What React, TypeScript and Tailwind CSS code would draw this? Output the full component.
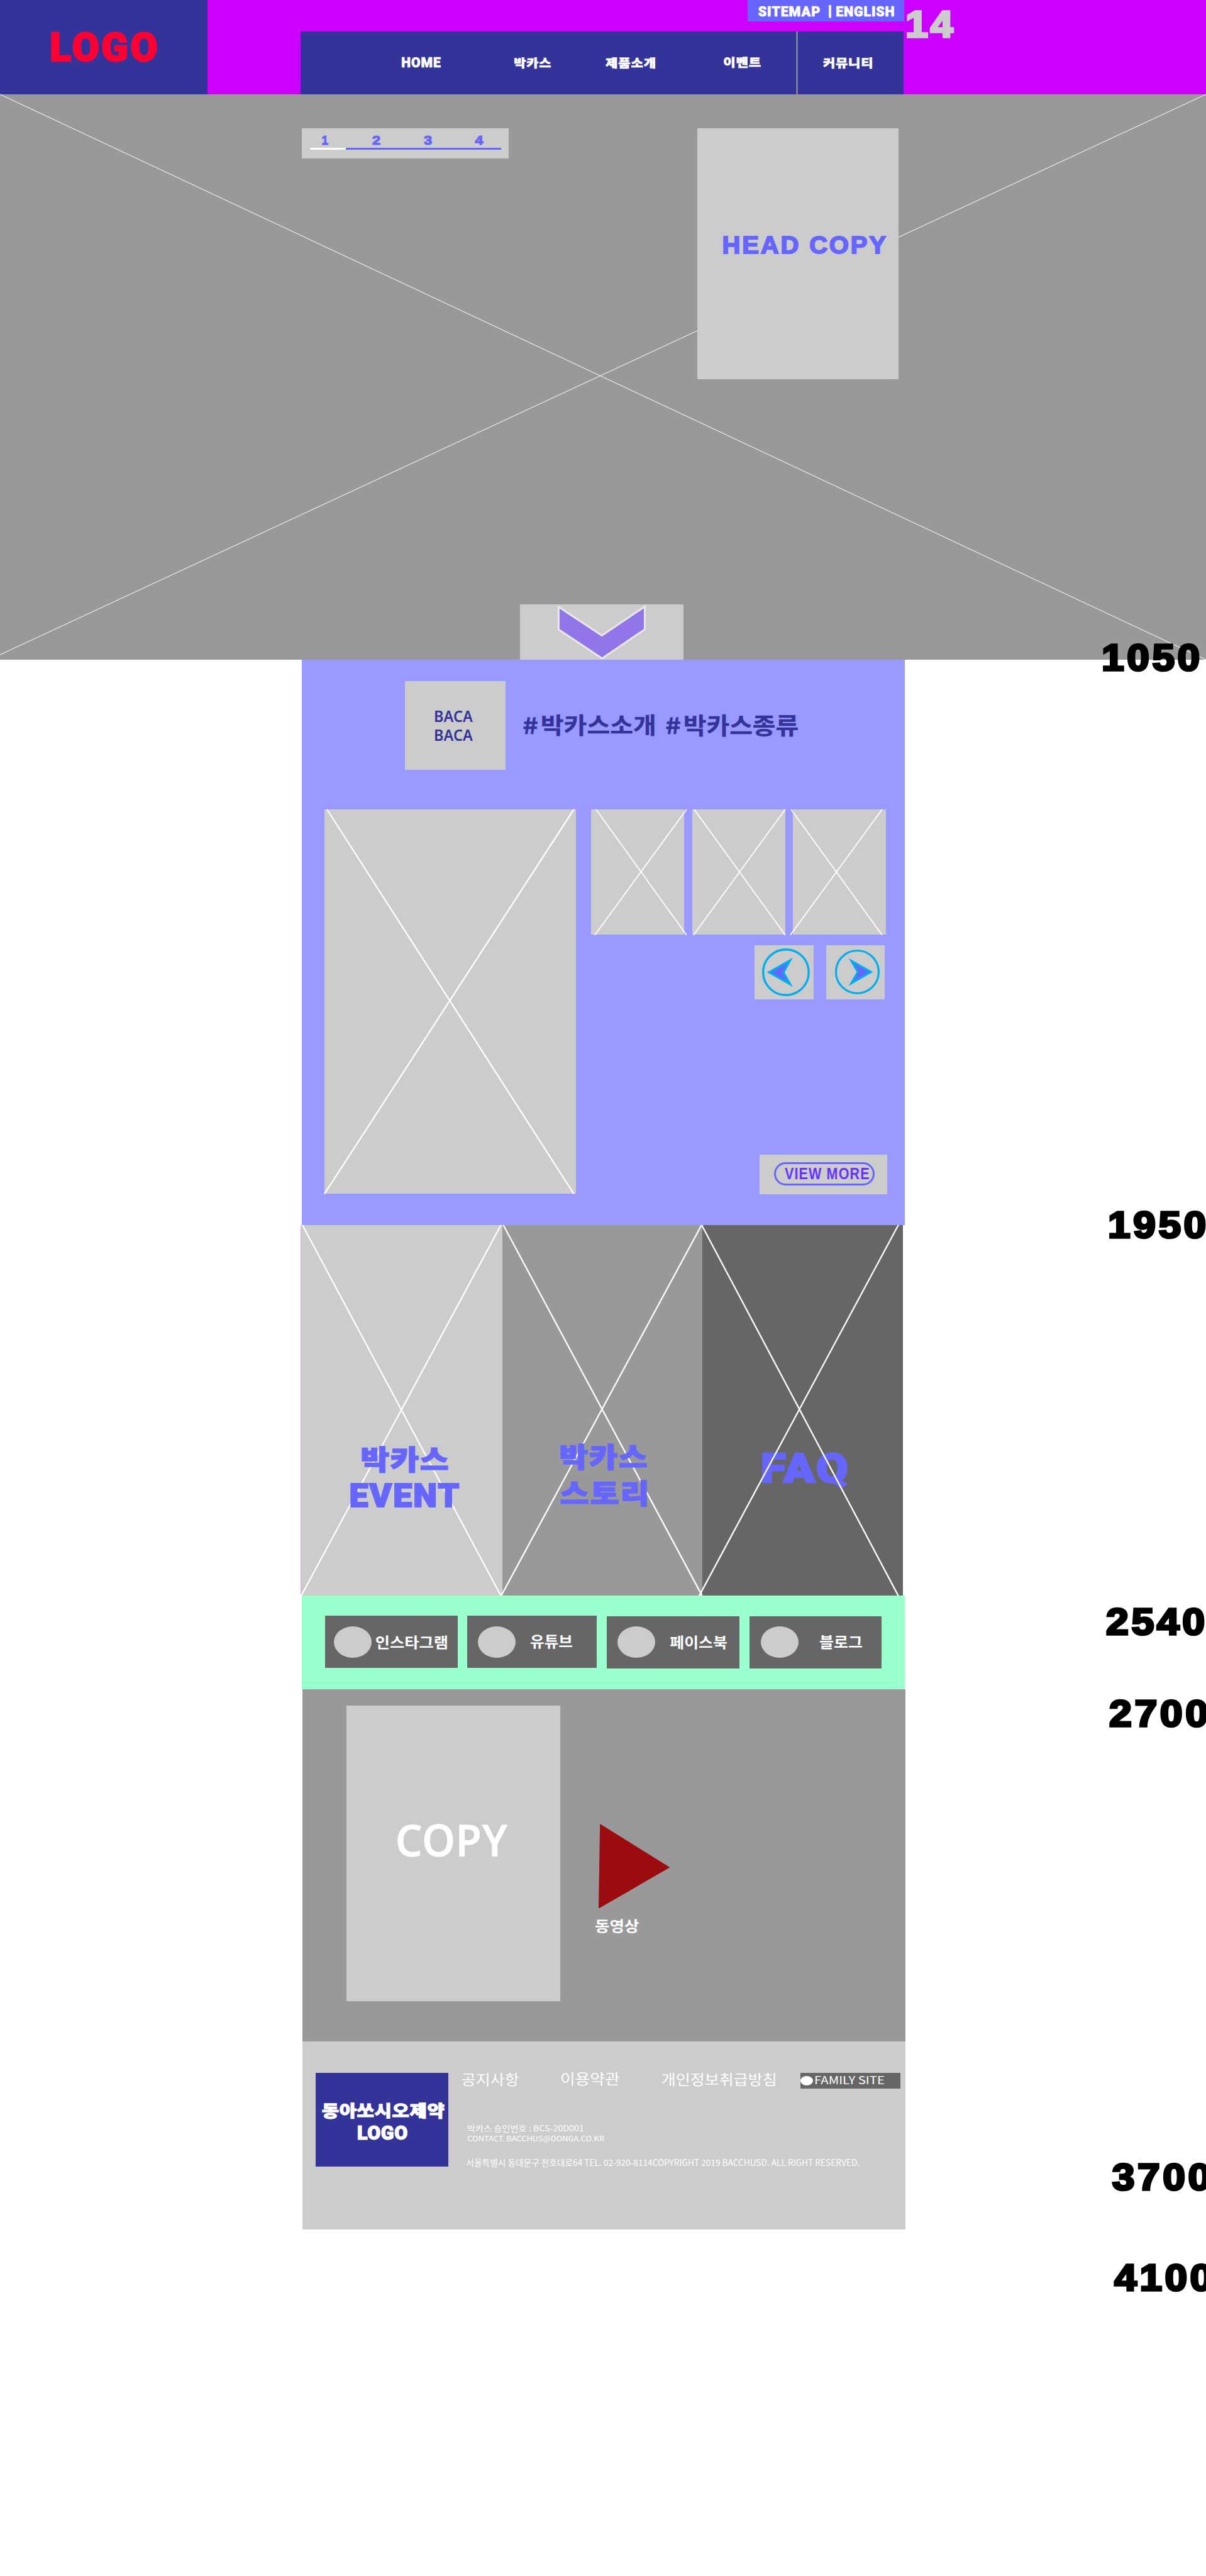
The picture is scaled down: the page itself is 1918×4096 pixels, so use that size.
import { useLayoutEffect, useRef, type ReactNode } from "react";

const HEAVY = "font-['Roboto','Noto_Sans_CJK_KR',sans-serif] font-black";
const ARIAL = "font-['Liberation_Sans',sans-serif] font-bold";
const KR = "font-['Noto_Sans_CJK_KR',sans-serif]";
const LATIN = "font-['Noto_Sans',sans-serif]";

/** Single line of text stretched so that its ink fills the box given by `className`. */
function Fit({ children, className, font }: { children: string; className: string; font: string }) {
  const box = useRef<HTMLDivElement>(null);
  const span = useRef<HTMLSpanElement>(null);

  useLayoutEffect(() => {
    const b = box.current;
    const s = span.current;
    const ctx = document.createElement("canvas").getContext("2d");
    if (!b || !s || !ctx) return;
    const cs = getComputedStyle(s);
    ctx.font = `${cs.fontWeight} 100px ${cs.fontFamily}`;
    const m = ctx.measureText(children);
    const tracking = (parseFloat(cs.letterSpacing) || 0) * (children.length - 1);
    const stroke = parseFloat(cs.getPropertyValue("-webkit-text-stroke-width")) || 0;
    const left = m.actualBoundingBoxLeft + stroke / 2;
    const top = m.actualBoundingBoxAscent + stroke / 2;
    const sx = b.clientWidth / (left + m.actualBoundingBoxRight + tracking + stroke / 2);
    const sy = b.clientHeight / (top + m.actualBoundingBoxDescent + stroke / 2);
    const base = (100 + m.fontBoundingBoxAscent - m.fontBoundingBoxDescent) / 2;
    s.style.transform = `translate(${left * sx}px, ${(top - base) * sy}px) scale(${sx}, ${sy})`;
  }, [children]);

  return (
    <div ref={box} className={`relative shrink-0 ${className}`}>
      <span
        ref={span}
        className={`absolute left-0 top-0 origin-top-left whitespace-pre text-[100px] leading-none ${font}`}
      >
        {children}
      </span>
    </div>
  );
}

/** Crossed placeholder lines laid over a panel. */
function Cross({ w, h, a, b, width = 1.8 }: { w: number; h: number; a: number[]; b: number[]; width?: number }) {
  return (
    <svg
      className="pointer-events-none absolute left-0 top-0 overflow-visible"
      width={w}
      height={h}
      stroke="#fff"
      strokeWidth={width}
    >
      <line x1={a[0]} y1={a[1]} x2={a[2]} y2={a[3]} />
      <line x1={b[0]} y1={b[1]} x2={b[2]} y2={b[3]} />
    </svg>
  );
}

function Header() {
  const font = `${HEAVY} tracking-[4px] text-white [-webkit-text-stroke:3px_white]`;
  return (
    <header className="flex h-[150px] bg-[#cc00ff]">
      <div className="h-[150px] w-[330px] bg-[#333399] pl-[81px] pt-[50px]">
        <Fit className="h-[49px] w-[169px]" font={`${HEAVY} tracking-[6px] text-[#ff0033] [-webkit-text-stroke:4px_#ff0033]`}>LOGO</Fit>
      </div>
      <div className="ml-[148px] w-[962px]">
        <div className="ml-[712px] flex h-[34px] w-[250px] bg-[#6666ff] pl-[17px] pt-[8px]">
          <Fit className="mt-[2px] h-[17px] w-[98px]" font={font}>SITEMAP</Fit>
          <Fit className="ml-[14px] h-[20px] w-[4px]" font={`${HEAVY} text-white`}>|</Fit>
          <Fit className="ml-[8px] mt-[2px] h-[17px] w-[92px]" font={font}>ENGLISH</Fit>
        </div>
        <nav className="mt-[16px] flex h-[100px] w-[960px] bg-[#333399]">
          <Fit className="ml-[162px] mt-[41px] h-[17px] w-[62px]" font={font}>HOME</Fit>
          <Fit className="ml-[117px] mt-[41px] h-[18px] w-[58px]" font={font}>박카스</Fit>
          <Fit className="ml-[87px] mt-[41px] h-[18px] w-[79px]" font={font}>제품소개</Fit>
          <Fit className="ml-[109px] mt-[40px] h-[18px] w-[59px]" font={font}>이벤트</Fit>
          <div className="ml-[57px] h-[100px] w-[1px] bg-white" />
          <Fit className="ml-[41px] mt-[41px] h-[18px] w-[78px]" font={font}>커뮤니티</Fit>
        </nav>
      </div>
      <Fit className="ml-[4px] mt-[17px] h-[44px] w-[76px]" font={`${ARIAL} tracking-[6px] text-[#cccccc] [-webkit-text-stroke:6px_#cccccc]`}>14</Fit>
    </header>
  );
}

function Hero() {
  const num = `${ARIAL} text-[#6666ff] [-webkit-text-stroke:6px_#6666ff]`;
  return (
    <section className="relative h-[900px] bg-[#999999]">
      <Cross w={1920} h={900} a={[0, 0, 1920, 900]} b={[1920, 0, 0, 892]} width={1} />
      <div className="relative flex pl-[480px] pt-[54px]">
        <div className="h-[48px] w-[330px] bg-[#cccccc]">
          <div className="flex pt-[12px]">
            <Fit className="ml-[33px] h-[15px] w-[10px]" font={num}>1</Fit>
            <Fit className="ml-[70px] h-[15px] w-[13px]" font={num}>2</Fit>
            <Fit className="ml-[69px] h-[15px] w-[13px]" font={num}>3</Fit>
            <Fit className="ml-[68px] h-[15px] w-[14px]" font={num}>4</Fit>
          </div>
          <div className="ml-[14px] mt-[4px] flex h-[3px] w-[304px] bg-[#6666ff]">
            <div className="h-[3px] w-[57px] bg-white" />
          </div>
        </div>
        <div className="ml-[300px] h-[400px] w-[320px] bg-[#cccccc] pl-[41px] pt-[171px]">
          <Fit className="h-[30px] w-[260px]" font={`${ARIAL} tracking-[7px] text-[#6666ff] [-webkit-text-stroke:5px_#6666ff]`}>HEAD COPY</Fit>
        </div>
      </div>
      <div className="absolute bottom-0 left-[828px] h-[88px] w-[260px] bg-[#cccccc]">
        <svg width="260" height="88" viewBox="828 962 260 88">
          <path
            d="M889.5 966 L958.3 1011.5 L1026.7 965.5 V1001.8 L958.7 1048 L889.5 1002 Z"
            fill="#9275e8"
            stroke="#e8e8e8"
            strokeWidth="3"
          />
        </svg>
      </div>
    </section>
  );
}

const thumbs = [
  { cls: "", a: [8, 0, 152, 200], b: [152, 0, 6, 200] },
  { cls: "ml-[13px]", a: [3, 0, 148, 200], b: [148, 0, 2, 200] },
  { cls: "ml-[12px]", a: [-3, 0, 142, 200], b: [142, 0, -4, 200] },
];

function Intro() {
  const tag = `${KR} font-bold text-[#333399] [-webkit-text-stroke:1px_#333399]`;
  const baca = `${LATIN} font-semibold text-[#333399]`;
  return (
    <section className="ml-[480px] h-[900px] w-[960px] bg-[#9999ff]">
      <div className="flex pl-[165px] pt-[34px]">
        <div className="h-[141px] w-[160px] bg-[#cccccc] pl-[48px] pt-[47px]">
          <Fit className="h-[18px] w-[60px]" font={baca}>BACA</Fit>
          <Fit className="mt-[12px] h-[18px] w-[60px]" font={baca}>BACA</Fit>
        </div>
        <Fit className="ml-[28px] mt-[57px] h-[27px] w-[23px]" font={tag}>#</Fit>
        <Fit className="ml-[7px] mt-[53px] h-[35px] w-[179px]" font={tag}>박카스소개</Fit>
        <Fit className="ml-[18px] mt-[57px] h-[27px] w-[23px]" font={tag}>#</Fit>
        <Fit className="ml-[7px] mt-[53px] h-[36px] w-[180px]" font={tag}>박카스종류</Fit>
      </div>
      <div className="flex pl-[37px] pt-[63px]">
        <div className="relative h-[612px] w-[400px] bg-[#cccccc]">
          <Cross w={400} h={612} a={[4, 0, 397, 612]} b={[397, 0, 0, 612]} width={2.3} />
        </div>
        <div className="ml-[24px] w-[480px]">
          <div className="flex">
            {thumbs.map((t, i) => (
              <div key={i} className={`relative h-[200px] w-[148px] bg-[#cccccc] ${t.cls}`}>
                <Cross w={148} h={200} a={t.a} b={t.b} />
              </div>
            ))}
          </div>
          <div className="mt-[17px] flex pl-[260px]">
            <div className="h-[86px] w-[94px] bg-[#cccccc]">
              <svg width="94" height="86" viewBox="1201 1505 94 86" stroke="#00aeef" strokeWidth="3.4">
                <circle cx="1251" cy="1548" r="36.3" fill="none" />
                <path d="M1224.3 1548 L1257.5 1529.2 L1247 1548.3 L1257.5 1566.8 Z" fill="#6666ff" />
              </svg>
            </div>
            <div className="ml-[20px] h-[86px] w-[94px] bg-[#cccccc]">
              <svg width="94" height="86" viewBox="1315 1505 94 86" stroke="#00aeef" strokeWidth="3.2">
                <circle cx="1364.5" cy="1547.5" r="34" fill="none" />
                <path d="M1386.3 1547.5 L1355 1529.8 L1365.3 1547.5 L1355 1565.6 Z" fill="#6666ff" />
              </svg>
            </div>
          </div>
          <div className="ml-[268px] mt-[247px] h-[63px] w-[203px] bg-[#cccccc] pl-[23px] pt-[12px]">
            <div className="h-[37px] w-[160px] rounded-full border-[3.1px] border-[#6666ff] pl-[14px] pt-[7px]">
              <Fit className="h-[18px] w-[134px]" font="font-['Liberation_Sans',sans-serif] tracking-[5px] font-bold text-[#6633ff]">VIEW MORE</Fit>
            </div>
          </div>
        </div>
      </div>
    </section>
  );
}

function Panels() {
  const t = `${HEAVY} tracking-[4px] text-[#6666ff] [-webkit-text-stroke:4px_#6666ff]`;
  return (
    <section className="ml-[478px] flex h-[590px] w-[960px]">
      <div className="relative w-[322px] border-l border-[#e8a0f0] bg-[#cccccc]">
        <Cross w={321} h={590} a={[2, 0, 318, 590]} b={[318, 0, 0, 590]} width={2.3} />
        <div className="relative pl-[79px] pt-[351px]">
          <Fit className="ml-[18px] h-[43px] w-[138px]" font={t}>박카스</Fit>
          <Fit className="mt-[16px] h-[39px] w-[174px]" font={t}>EVENT</Fit>
        </div>
      </div>
      <div className="relative w-[318px] bg-[#999999]">
        <Cross w={318} h={590} a={[1.5, 0, 318, 590]} b={[317, 0, -2, 590]} width={2.3} />
        <div className="relative pl-[92px] pt-[347px]">
          <Fit className="h-[43px] w-[138px]" font={t}>박카스</Fit>
          <Fit className="mt-[16px] h-[43px] w-[138px]" font={t}>스토리</Fit>
        </div>
      </div>
      <div className="relative w-[320px] bg-[#666666] pl-[95px] pt-[361px]">
        <Fit className="h-[59px] w-[136px]" font={t}>FAQ</Fit>
        <Cross w={320} h={590} a={[-1, 0, 312, 590]} b={[312, 0, -5, 590]} width={2.3} />
      </div>
    </section>
  );
}

function Social({ className, circle, children }: { className: string; circle: string; children: ReactNode }) {
  return (
    <div className={`flex h-[83px] bg-[#666666] ${className}`}>
      <div className={`h-[50px] w-[60px] shrink-0 rounded-[50%] bg-[#cccccc] ${circle}`} />
      {children}
    </div>
  );
}

function SocialBar() {
  const f = `${KR} font-bold text-white`;
  return (
    <section className="ml-[480px] flex h-[149px] w-[960px] bg-[#99ffcc] pl-[38px] pt-[32px]">
      <Social className="w-[211px]" circle="ml-[14px] mt-[17px]">
        <Fit className="ml-[7px] mt-[31px] h-[22px] w-[113px]" font={f}>인스타그램</Fit>
      </Social>
      <Social className="ml-[15px] w-[206px]" circle="ml-[17px] mt-[17px]">
        <Fit className="ml-[24px] mt-[31px] h-[22px] w-[66px]" font={f}>유튜브</Fit>
      </Social>
      <Social className="ml-[16px] mt-[1px] w-[211px]" circle="ml-[17px] mt-[16px]">
        <Fit className="ml-[24px] mt-[30px] h-[22px] w-[90px]" font={f}>페이스북</Fit>
      </Social>
      <Social className="ml-[16px] mt-[1px] w-[211px]" circle="ml-[18px] mt-[16px]">
        <Fit className="ml-[34px] mt-[30px] h-[22px] w-[67px]" font={f}>블로그</Fit>
      </Social>
    </section>
  );
}

function Video() {
  return (
    <section className="ml-[482px] flex h-[560px] w-[960px] bg-[#999999] pl-[70px] pt-[26px]">
      <div className="h-[470px] w-[340px] bg-[#cccccc] pl-[81px] pt-[190px]">
        <Fit className="h-[51px] w-[176px]" font={`${LATIN} font-semibold text-white`}>COPY</Fit>
      </div>
      <div className="pl-[56px] pt-[188px]">
        <svg className="ml-[5px]" width="114" height="136" viewBox="953 2903 114 136">
          <path d="M955.2 2903 L1066.5 2972.3 L953 3038 Z" fill="#9b0b0f" />
        </svg>
        <Fit className="mt-[15px] h-[22px] w-[69px]" font={`${KR} font-bold text-white`}>동영상</Fit>
      </div>
    </section>
  );
}

function Footer() {
  const logo = `${HEAVY} tracking-[2px] text-white [-webkit-text-stroke:4px_white]`;
  const link = `${KR} font-normal text-white`;
  return (
    <footer className="ml-[482px] flex h-[300px] w-[960px] bg-[#cccccc] pl-[21px] pt-[50px]">
      <div className="h-[150px] w-[211px] bg-[#333399] pl-[10px] pt-[49px]">
        <Fit className="h-[26px] w-[195px]" font={logo}>동아쏘시오제약</Fit>
        <Fit className="ml-[57px] mt-[9px] h-[24px] w-[79px]" font={logo}>LOGO</Fit>
      </div>
      <div className="ml-[22px]">
        <div className="flex h-[25px]">
          <Fit className="h-[21px] w-[90px]" font={link}>공지사항</Fit>
          <Fit className="-mt-px ml-[68px] h-[21px] w-[92px]" font={link}>이용약관</Fit>
          <Fit className="ml-[68px] h-[21px] w-[180px]" font={link}>개인정보취급방침</Fit>
          <div className="ml-[40px] flex h-[25px] w-[160px] bg-[#666666] pt-[5px]">
            <div className="h-[15px] w-[20px] rounded-[50%] bg-white" />
            <Fit className="ml-[4px] h-[13px] w-[109px]" font={link}>FAMILY SITE</Fit>
          </div>
        </div>
        <div className="pl-[9px] pt-[58px]">
          <Fit className="h-[12px] w-[184px]" font={link}>박카스 승인번호 : BCS-20D001</Fit>
          <Fit className="mt-[6px] h-[11px] w-[217px]" font={link}>CONTACT. BACCHUS@DONGA.CO.KR</Fit>
          <Fit className="-ml-[2px] mt-[25px] h-[13px] w-[625px]" font={link}>
            서울특별시 동대문구 천호대로64 TEL. 02-920-8114COPYRIGHT 2019 BACCHUSD. ALL RIGHT RESERVED.
          </Fit>
        </div>
      </div>
    </footer>
  );
}

const marks = [
  { label: "1050", pos: "left-[1756px] top-[1025px] w-[154px]" },
  { label: "1950", pos: "left-[1766px] top-[1928px] w-[154px]" },
  { label: "2540", pos: "left-[1761px] top-[2560px] w-[157px]" },
  { label: "2700", pos: "left-[1766px] top-[2706px] w-[157px]" },
  { label: "3700", pos: "left-[1770px] top-[3444px] w-[157px]" },
  { label: "4100", pos: "left-[1773px] top-[3604px] w-[157px]" },
];

export default function App() {
  return (
    <div className="relative h-[4100px] w-[1920px] overflow-hidden bg-white [zoom:0.99896]">
      <Header />
      <Hero />
      <Intro />
      <Panels />
      <SocialBar />
      <Video />
      <Footer />
      {marks.map((m) => (
        <div key={m.label} className={`absolute ${m.pos}`}>
          <Fit className="h-[45px] w-full" font={`${ARIAL} tracking-[7px] text-black [-webkit-text-stroke:6px_black]`}>{m.label}</Fit>
        </div>
      ))}
    </div>
  );
}
